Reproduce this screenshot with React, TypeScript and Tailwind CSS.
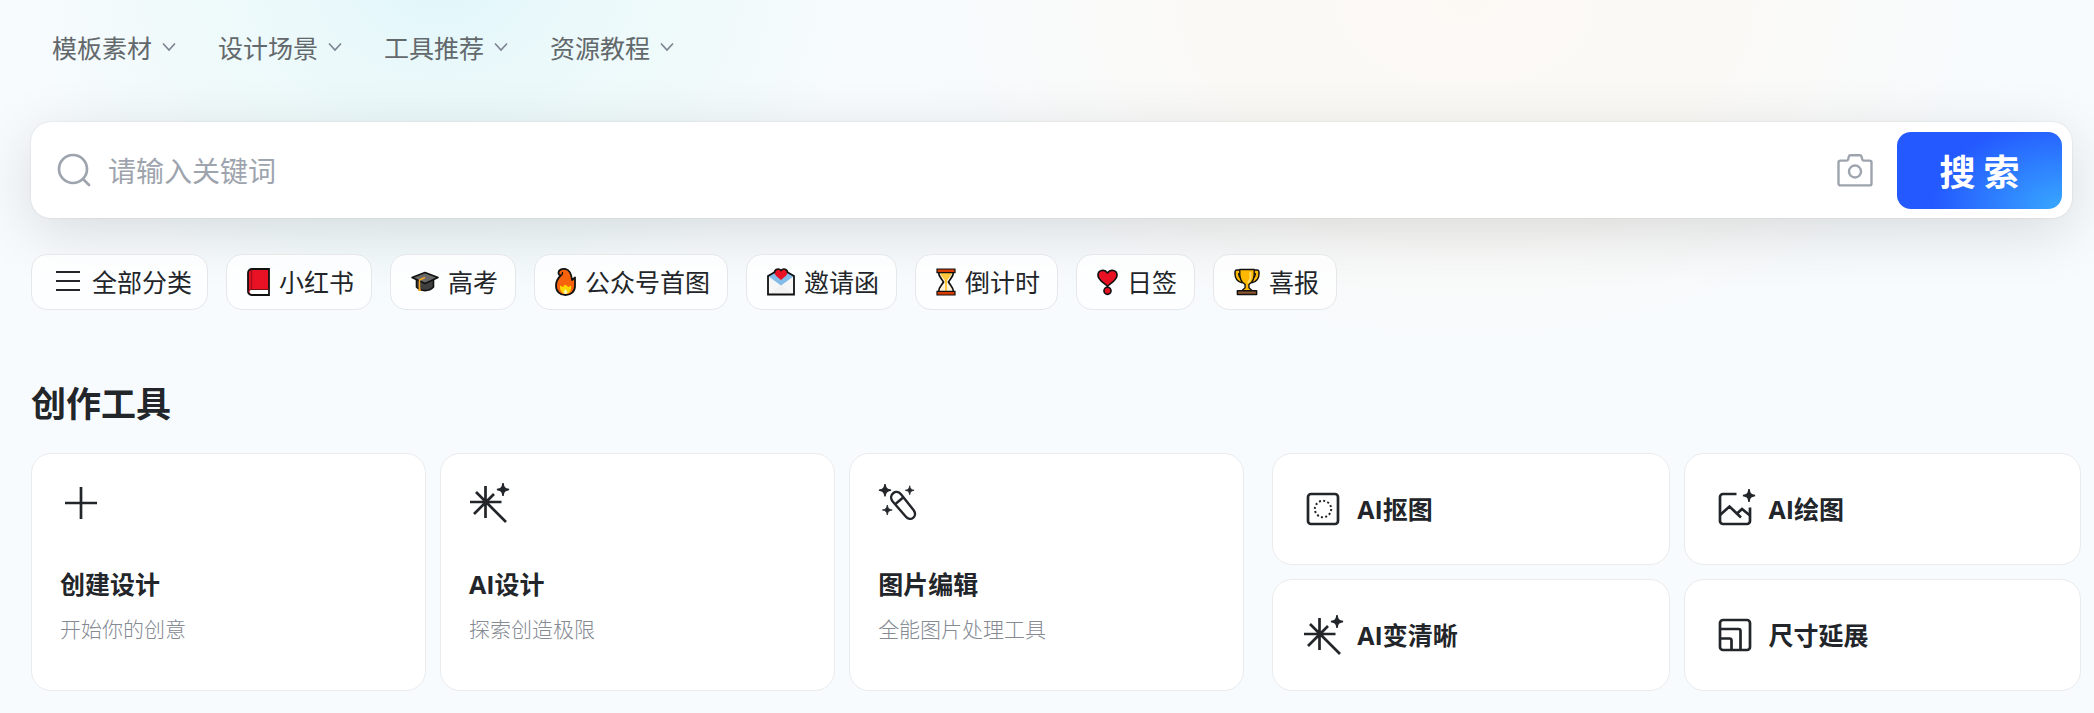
import type { ReactNode } from 'react'

const navItems = ['模板素材', '设计场景', '工具推荐', '资源教程']

function ChevronDown() {
  return (
    <svg width="14" height="10" viewBox="0 0 14 10" fill="none" stroke="#7b8290" strokeWidth="1.6" aria-hidden="true">
      <path d="M1 1.5 7 8l6-6.5" />
    </svg>
  )
}

function SearchIcon() {
  return (
    <svg width="34" height="34" viewBox="0 0 34 34" fill="none" stroke="#9ea4ae" strokeWidth="2.7" strokeLinecap="round" aria-hidden="true">
      <circle cx="16" cy="16" r="14" />
      <path d="m26 26 6 6" />
    </svg>
  )
}

function CameraIcon() {
  return (
    <svg width="36" height="34" viewBox="0 0 36 34" fill="none" stroke="#9ea4ae" strokeWidth="2.4" strokeLinejoin="round" aria-hidden="true">
      <path d="M3.5 7.6h6.2c.8 0 1.2-.4 1.4-1.1l.8-3c.2-.8.7-1.3 1.5-1.3h9.6c.8 0 1.3.5 1.5 1.3l.8 3c.2.7.6 1.1 1.4 1.1h5.8c1.2 0 2 .8 2 2v20.8c0 1.2-.8 2-2 2h-29c-1.2 0-2-.8-2-2V9.6c0-1.2.8-2 2-2Z" />
      <circle cx="18" cy="18.5" r="6" />
    </svg>
  )
}

function MenuIcon() {
  return (
    <svg width="24" height="28" viewBox="0 0 24 28" stroke="#222529" strokeWidth="2" aria-hidden="true">
      <path d="M0 4h24M0 13h24M0 22h24" />
    </svg>
  )
}

function BookIcon() {
  return (
    <svg width="23" height="28" viewBox="0 0 23 28" aria-hidden="true">
      <path d="M5 1h17v26H4.5A3.5 3.5 0 0 1 1 23.5V5a4 4 0 0 1 4-4Z" fill="#e81224" />
      <path d="M4 22h18v4H4.5C2 26 2 22 4 22Z" fill="#fff" />
      <path d="M4.5 1v21" stroke="#a80f1d" strokeWidth="1.5" />
      <path d="M5 1h17v26H4.5A3.5 3.5 0 0 1 1 23.5V5a4 4 0 0 1 4-4Z" fill="none" stroke="#111" strokeWidth="1.8" />
      <path d="M1.5 24C2 21.5 3 21.500 5 21.5h17" fill="none" stroke="#7d0d17" strokeWidth="1" />
    </svg>
  )
}

function CapIcon() {
  return (
    <svg width="28" height="28" viewBox="0 0 28 28" strokeLinejoin="round" aria-hidden="true">
      <path d="M5.5 10.500v8.500c4.5 4.8 12.5 4.8 17 0v-8.500Z" fill="#3f3f3f" stroke="#111" strokeWidth="1.6" />
      <path d="M1 9.500 14 4.500l13 5-13 6Z" fill="#696969" stroke="#111" strokeWidth="1.6" />
      <path d="M14 9.500 8.500 12v8" fill="none" stroke="#f5a623" strokeWidth="1.5" />
      <path d="m8.500 17-1.500 6h3Z" fill="#f5a623" />
    </svg>
  )
}

function FireIcon() {
  return (
    <svg width="21" height="28" viewBox="0 0 21 28" strokeLinejoin="round" aria-hidden="true">
      <path d="M10.500 1C6 .5 3.300 2.500 3.500 5c.1 1.500 1 2.300 2.200 2.500C3 10 1 13 1 18c0 5.500 4 9 9.500 9s9.500-3.500 9.500-9V9.500l-3 2.500C16.500 6 14.500 2 10.500 1Z" fill="#f7630c" stroke="#111" strokeWidth="1.8" />
      <path d="M10 16.500 8 19l-3-1.500c-.5 4 1.500 8.500 5.500 8.500s6.300-4 5.500-8.500L13.500 19Z" fill="#ffd500" />
      <path d="m10.500 21-2 3c.5 1.500 1 2 2 2s2-.8 2-2Z" fill="#fff5b8" />
      <path d="M5.500 7.500c1.800-.3 2.300-1.800 1.800-3.500" fill="none" stroke="#111" strokeWidth="1.3" />
    </svg>
  )
}

function LetterIcon() {
  return (
    <svg width="28" height="28" viewBox="0 0 28 28" aria-hidden="true">
      <path d="M1 8h26v18.500H1Z" fill="#f6f6f6" />
      <path d="m1 8 13 9.500L27 8l-7-4H8Z" fill="#83bce8" />
      <path d="m1 26.500 13-9 13 9Z" fill="#f1f1f1" />
      <path d="M14 12C10 8.500 7.500 7 7.500 4.200 7.500.8 12 0 14 2.800c2-2.800 6.500-2 6.500 1.400C20.500 7 18 8.500 14 12Z" fill="#e81224" />
      <path d="M8 4 1 8v18.500h26V8l-7-4" fill="none" stroke="#111" strokeWidth="1.8" />
      <path d="M7.500 4.500C7.500.8 12 0 14 2.500c2-2.500 6.500-1.700 6.500 2" fill="none" stroke="#111" strokeWidth="1.6" />
    </svg>
  )
}

function HourglassIcon() {
  return (
    <svg width="20" height="28" viewBox="0 0 20 28" aria-hidden="true">
      <path d="M2.500 4C2.500 9 6 11 7.500 14c-1.500 3-5 5-5 10h15c0-5-3.500-7-5-10 1.500-3 5-5 5-10Z" fill="#fff2da" stroke="#111" strokeWidth="1.7" />
      <path d="M4 5c.8 3.500 5 6 6 9.500C11 11 15.200 8.500 16 5Z" fill="#ffc83d" />
      <path d="M10 12v12" stroke="#ffb900" strokeWidth="1.4" />
      <path d="M1 1h18v3.600H1ZM1 23.400h18V27H1Z" fill="#da3b01" stroke="#111" strokeWidth="1.2" />
    </svg>
  )
}

function HeartMarkIcon() {
  return (
    <svg width="21" height="28" viewBox="0 0 22 28" fill="#e81224" stroke="#111" strokeWidth="1.7" strokeLinejoin="round" aria-hidden="true">
      <path d="M11 18.500C6 14 1 11.500 1 6.800 1 1.500 8 0 11 4.500 14 0 21 1.500 21 6.800c0 4.700-5 7.200-10 11.700Z" />
      <circle cx="11" cy="23.2" r="3.7" />
    </svg>
  )
}

function TrophyIcon() {
  return (
    <svg width="26" height="28" viewBox="0 0 27 28" strokeLinejoin="round" aria-hidden="true">
      <path d="M8 3.500H3C2.500 9 5 12 9 13M19 3.500h5C24.500 9 22 12 18 13" fill="none" stroke="#111" strokeWidth="5.4" />
      <path d="M8 3.500H3C2.500 9 5 12 9 13M19 3.500h5C24.500 9 22 12 18 13" fill="none" stroke="#ffb900" strokeWidth="2.4" />
      <path d="M6 1h15c.5 7-.5 13-5.500 15.500V20l4 3.500h-12l4-3.500v-3.500C6.500 14 5.500 8 6 1Z" fill="#ffb900" stroke="#111" strokeWidth="1.4" />
      <path d="M17 3.500v7.500l-2.500 4" fill="none" stroke="#ffd96b" strokeWidth="2" />
      <path d="M3.500 23h20v4h-20Z" fill="#8e562e" stroke="#111" strokeWidth="1.5" />
    </svg>
  )
}

const categories: { label: string; icon: ReactNode }[] = [
  { label: '小红书', icon: <BookIcon /> },
  { label: '高考', icon: <CapIcon /> },
  { label: '公众号首图', icon: <FireIcon /> },
  { label: '邀请函', icon: <LetterIcon /> },
  { label: '倒计时', icon: <HourglassIcon /> },
  { label: '日签', icon: <HeartMarkIcon /> },
  { label: '喜报', icon: <TrophyIcon /> },
]

function ToolIcon({ children }: { children: ReactNode }) {
  return (
    <svg className="shrink-0 overflow-visible" width="40" height="40" viewBox="0 0 40 40" fill="none" stroke="#222529" strokeWidth="2.7" aria-hidden="true">
      {children}
    </svg>
  )
}

function PlusIcon() {
  return (
    <ToolIcon>
      <path d="M21 4v32M5 20h32" />
    </ToolIcon>
  )
}

function BurstIcon() {
  return (
    <ToolIcon>
      <path d="M16.5 3v32M1 19h31.500M7 9l30 30M25 11 5 31" />
      <path d="M34 0c.6 4.500 1.500 5.600 6 6.500-4.500.9-5.400 2-6 6.500-.6-4.500-1.500-5.600-6-6.500 4.500-.9 5.400-2 6-6.500Z" fill="#222529" strokeWidth="1.4" />
    </ToolIcon>
  )
}

function WandIcon() {
  return (
    <ToolIcon>
      <path d="M14.700 18.500c-5-6.500 3.300-13.200 8.500-7l12.500 15.800c4.300 6.200-3.200 12-8 6.200ZM18 20.500l6.500-5.500" strokeWidth="2.4" />
      <g fill="#222529">
        <path d="M7 1c.8 4.300 1.500 5.200 6 6.200-4.500 1-5.200 1.900-6 6.200-.8-4.300-1.500-5.200-6-6.200 4.500-1 5.200-1.900 6-6.200Z" strokeWidth="1.2" />
        <path d="M31.700 2.800c.6 3.100 1.300 3.900 4.400 4.500-3.100.6-3.800 1.400-4.400 4.500-.6-3.100-1.300-3.900-4.400-4.500 3.100-.6 3.800-1.400 4.400-4.500Z" strokeWidth=".8" />
        <path d="M9.300 22c.6 3.400 1.500 4.400 4.900 5-3.400.6-4.300 1.600-4.900 5-.6-3.400-1.500-4.400-4.900-5 3.400-.6 4.300-1.600 4.900-5Z" strokeWidth=".8" />
      </g>
    </ToolIcon>
  )
}

function CutoutIcon() {
  return (
    <ToolIcon>
      <rect x="5" y="5" width="30" height="30" rx="3" />
      <circle cx="20" cy="20" r="8.2" strokeWidth="2" strokeDasharray="2 2.29" />
    </ToolIcon>
  )
}

function DrawIcon() {
  return (
    <ToolIcon>
      <path d="M21.500 5H8a3 3 0 0 0-3 3v24a3 3 0 0 0 3 3h24a3 3 0 0 0 3-3V18.500" />
      <path d="m5 26 9.500-8.500L26 28.500M21.500 25l5.500-5 8 6.500" />
      <path d="M34 0c.6 4.500 1.500 5.600 6 6.500-4.500.9-5.400 2-6 6.500-.6-4.500-1.500-5.600-6-6.500 4.500-.9 5.400-2 6-6.500Z" fill="#222529" strokeWidth="1.4" />
    </ToolIcon>
  )
}

function ExpandIcon() {
  return (
    <ToolIcon>
      <rect x="5" y="5" width="30" height="30" rx="3" />
      <path d="M5 14h18.500a2 2 0 0 1 2 2v19M5 23.500h9.500a2 2 0 0 1 2 2V35" />
    </ToolIcon>
  )
}

const mainTools = [
  { title: '创建设计', desc: '开始你的创意', icon: <PlusIcon /> },
  { title: 'AI设计', desc: '探索创造极限', icon: <BurstIcon /> },
  { title: '图片编辑', desc: '全能图片处理工具', icon: <WandIcon /> },
]

const aiTools = [
  { title: 'AI抠图', icon: <CutoutIcon /> },
  { title: 'AI绘图', icon: <DrawIcon /> },
  { title: 'AI变清晰', icon: <BurstIcon /> },
  { title: '尺寸延展', icon: <ExpandIcon /> },
]

export default function App() {
  return (
    <div className="min-h-screen bg-[#f7fbfe] bg-[radial-gradient(ellipse_420px_350px_at_440px_-30px,#e0f6fc_0%,#ebf9fa_35%,#f1fafb_70%,transparent_100%),radial-gradient(ellipse_560px_380px_at_70%_0px,#fcf9f5_0%,#faf9f6_50%,transparent_100%)] bg-no-repeat pl-[31px] pr-[13px] pb-[22px] font-['Noto_Sans_CJK_SC',sans-serif] text-[#222529]">
      <nav className="flex gap-[42px] pl-[21px] pt-[29px]">
        {navItems.map((item) => (
          <button key={item} type="button" className="flex items-center gap-[10px] text-[25px] leading-9 text-[#62686b]">
            {item}
            <ChevronDown />
          </button>
        ))}
      </nav>

      <form
        onSubmit={(e) => e.preventDefault()}
        className="mt-[57px] mr-[9px] flex h-24 items-center rounded-[20px] bg-white pl-[26px] pr-[10px] shadow-[0_14px_60px_rgba(0,0,0,0.13),0_0_2px_rgba(0,0,0,0.12)]"
      >
        <SearchIcon />
        <input
          type="text"
          aria-label="搜索关键词"
          placeholder="请输入关键词"
          className="ml-[17px] min-w-0 flex-1 bg-transparent text-[28px] outline-none placeholder:text-[#9ea4ae]"
        />
        <button type="button" aria-label="以图搜索" className="mr-6">
          <CameraIcon />
        </button>
        <button
          type="submit"
          className="h-[77px] w-[165px] rounded-[14px] bg-[#2459ff] bg-[radial-gradient(ellipse_130px_90px_at_100%_100%,#38a8ff_0%,#2459ff_100%)] text-4xl font-bold text-white"
        >
          搜 索
        </button>
      </form>

      <div className="mt-9 flex flex-wrap gap-[18px]">
        <button type="button" className="flex h-14 items-center gap-3 rounded-2xl border border-[#e5e7ea] bg-white/80 pl-6 pr-[15px] text-[25px]">
          <MenuIcon />
          全部分类
        </button>
        {categories.map(({ label, icon }) => (
          <button key={label} type="button" className="flex h-14 items-center gap-[9px] rounded-2xl border border-[#e5e7ea] bg-white/80 pl-5 pr-[17px] text-[25px]">
            {icon}
            {label}
          </button>
        ))}
      </div>

      <h2 className="mt-[66px] text-[35px] font-bold leading-[52px]">创作工具</h2>

      <div className="mt-[25px] grid grid-cols-[3fr_2fr] gap-7">
        <div className="grid grid-cols-3 gap-[14px]">
          {mainTools.map(({ title, desc, icon }) => (
            <a key={title} href="#" className="flex h-[238px] flex-col rounded-[20px] border border-[#e9ebed] bg-white px-7 pt-[29px]">
              {icon}
              <span className="mt-[43px] font-['Open_Sans','Noto_Sans_CJK_SC',sans-serif] text-[25px] font-bold leading-9">{title}</span>
              <span className="mt-[10px] text-[21px] font-light leading-8 text-[#858a93]">{desc}</span>
            </a>
          ))}
        </div>
        <div className="grid grid-cols-2 gap-[14px]">
          {aiTools.map(({ title, icon }) => (
            <a key={title} href="#" className="flex h-28 items-center gap-[14px] rounded-[20px] border border-[#e9ebed] bg-white px-[30px]">
              {icon}
              <span className="font-['Open_Sans','Noto_Sans_CJK_SC',sans-serif] text-[25px] font-bold leading-9">{title}</span>
            </a>
          ))}
        </div>
      </div>
    </div>
  )
}
